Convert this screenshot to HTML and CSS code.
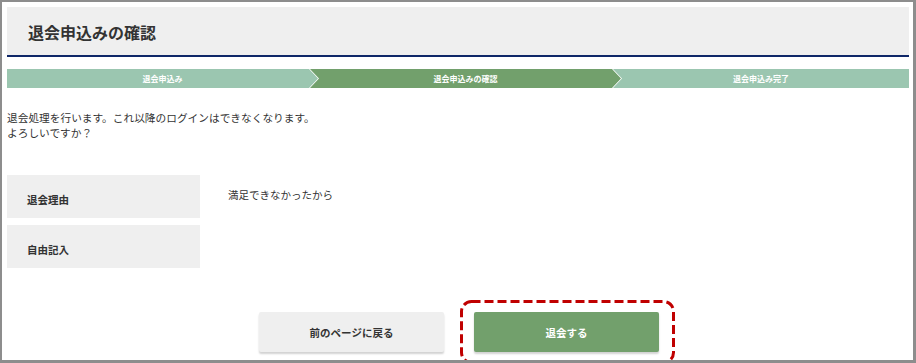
FILE: index.html
```html
<!DOCTYPE html>
<html lang="ja">

<head>
    <meta charset="UTF-8">
    <meta name="viewport" content="width=device-width, initial-scale=1.0">
    <title>退会申込みの確認</title>
    <link rel="stylesheet" href="styles.css">
</head>

<body>
    <div class="frame">
        <div class="page-header">
            <h1>退会申込みの確認</h1>
        </div>

        <div class="steps">
            <div class="step step-first">退会申込み</div>
            <div class="step step-active">退会申込みの確認</div>
            <div class="step step-last">退会申込み完了</div>
        </div>

        <p class="notice">退会処理を行います。これ以降のログインはできなくなります。<br>よろしいですか？</p>

        <div class="confirm-table">
            <div class="row">
                <div class="label">退会理由</div>
                <div class="value">満足できなかったから</div>
            </div>
            <div class="row">
                <div class="label">自由記入</div>
                <div class="value"></div>
            </div>
        </div>

        <div class="actions">
            <button class="button button-back">前のページに戻る</button>
            <div class="highlight-wrap">
                <button class="button button-submit">退会する</button>
                <svg class="highlight" width="215" height="64" viewBox="0 0 215 64">
                    <rect x="1.5" y="1.5" width="212" height="61" rx="10" ry="10" fill="none" stroke="#c00000" stroke-width="3" stroke-dasharray="9 4"></rect>
                </svg>
            </div>
        </div>
    </div>
</body>

</html>
```

FILE: styles.css
```css
* {
    box-sizing: border-box;
}

body {
    font-family: "Noto Sans CJK JP", "Noto Sans", sans-serif;
    margin: 0;
    padding: 0;
    color: #333;
    background-color: #fff;
}

.frame {
    width: 916px;
    height: 363px;
    border: 2px solid #8d8d8d;
    border-right-width: 3px;
    border-bottom-width: 3px;
    padding: 5px 4px 0 5px;
    overflow: hidden;
    position: relative;
}

.page-header {
    background-color: #efefef;
    height: 50px;
    border-bottom: 2px solid #0f2768;
    padding: 0 21px;
    display: flex;
    align-items: center;
}

.page-header h1 {
    margin: 0;
    font-size: 16px;
    font-weight: bold;
    color: #333;
    line-height: 1;
    padding-top: 1px;
}

.steps {
    display: flex;
    margin-top: 12px;
    height: 19px;
}

.step {
    height: 19px;
    color: #fff;
    font-size: 8px;
    font-weight: bold;
    line-height: 19px;
    text-align: center;
    background-color: #9bc6b0;
    margin-right: -8px;
    clip-path: polygon(0 0, calc(100% - 9px) 0, 100% 50%, calc(100% - 9px) 100%, 0 100%, 9px 50%);
}

.step-first {
    width: 311px;
    clip-path: polygon(0 0, calc(100% - 9px) 0, 100% 50%, calc(100% - 9px) 100%, 0 100%);
}

.step-active {
    width: 311px;
    background-color: #72a06c;
}

.step-last {
    flex: 1;
    margin-right: 0;
    clip-path: polygon(0 0, 100% 0, 100% 100%, 0 100%, 9px 50%);
}

.notice {
    margin: 22px 0 0;
    font-size: 10.7px;
    line-height: 15px;
}

.confirm-table {
    margin-top: 35px;
    display: flex;
    flex-direction: column;
    gap: 7px;
}

.row {
    display: flex;
    height: 43px;
}

.label {
    width: 193px;
    background-color: #efefef;
    font-size: 10.5px;
    font-weight: bold;
    padding: 17px 0 0 20px;
}

.value {
    font-size: 10.5px;
    padding: 12px 0 0 28px;
}

.actions {
    display: flex;
    justify-content: center;
    gap: 30px;
    margin-top: 44px;
    padding-left: 2px;
}

.button {
    width: 185px;
    height: 40px;
    border: none;
    border-radius: 2px;
    font-family: inherit;
    font-size: 10.5px;
    font-weight: bold;
    cursor: pointer;
    box-shadow: 0 2px 2px rgba(0, 0, 0, 0.18);
}

.button-back {
    background-color: #efefef;
    color: #333;
}

.button-submit {
    background-color: #72a06c;
    color: #fff;
    display: block;
}

.highlight-wrap {
    position: relative;
}

.highlight {
    position: absolute;
    top: -12px;
    left: -14px;
    pointer-events: none;
}
```
